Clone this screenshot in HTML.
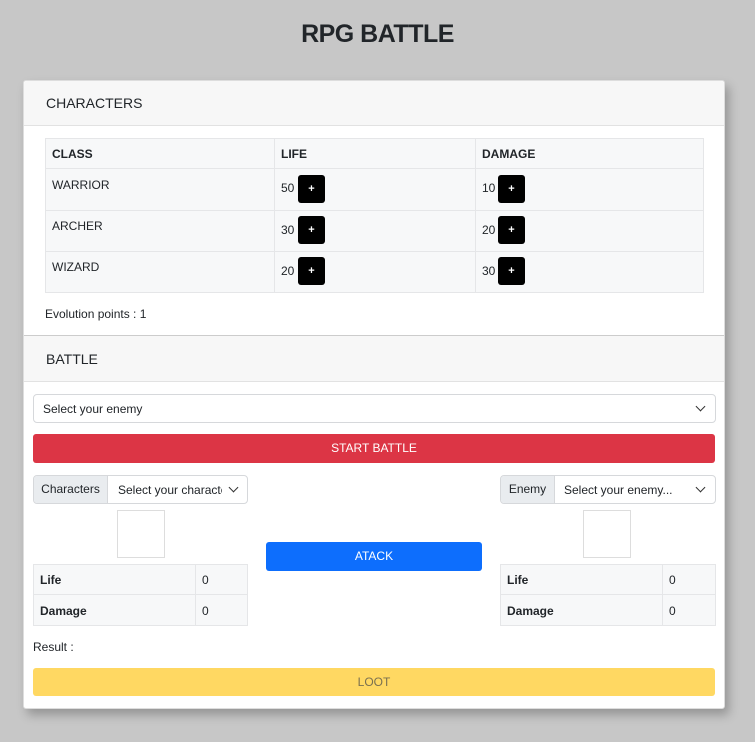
<!DOCTYPE html>
<html><head><style>
*{box-sizing:border-box;margin:0;padding:0}
body{width:755px;height:742px;background:#c7c7c7;font-family:"Liberation Sans",sans-serif;color:#212529;position:relative;overflow:hidden;font-size:12px}
.a{position:absolute}
h1{position:absolute;left:0;width:755px;top:20px;text-align:center;font-size:25px;font-weight:bold;color:#212529;letter-spacing:-0.5px}
.card{left:23px;top:80px;width:702px;height:629px;background:#fff;border:1px solid #ddd;border-radius:3px;box-shadow:4px 6px 10px rgba(0,0,0,.25)}
.hdr{background:#f7f7f7;border-bottom:1px solid #e2e2e2;font-size:14px;padding-left:22px;color:#212529}
.cell{background:#f7f8f9;border:1px solid #e5e6e8}
.pb{width:27px;height:28px;background:#000;border-radius:3px;color:#fff;text-align:center;line-height:28px;font-size:11px;font-weight:bold}
.sel{background:#fff;border:1px solid #d6d8db;border-radius:4px}
.chev{position:absolute;width:7px;height:7px;border-right:1.3px solid #333;border-bottom:1.3px solid #333;transform:rotate(45deg)}
.btn{border-radius:3px;text-align:center;color:#fff;font-size:12px}
</style></head><body>
<h1>RPG BATTLE</h1>
<div class="a card"></div>
<div class="a hdr" style="left:24px;top:81px;width:700px;height:45px;line-height:44px;border-radius:3px 3px 0 0">CHARACTERS</div>

<div class="a cell" style="left:45px;top:138px;width:230px;height:31px"></div>
<div class="a cell" style="left:274px;top:138px;width:202px;height:31px"></div>
<div class="a cell" style="left:475px;top:138px;width:229px;height:31px"></div>
<div class="a" style="left:52px;top:147px;font-weight:bold">CLASS</div>
<div class="a" style="left:281px;top:147px;font-weight:bold">LIFE</div>
<div class="a" style="left:482px;top:147px;font-weight:bold">DAMAGE</div>

<div class="a cell" style="left:45px;top:168px;width:230px;height:43px"></div>
<div class="a cell" style="left:274px;top:168px;width:202px;height:43px"></div>
<div class="a cell" style="left:475px;top:168px;width:229px;height:43px"></div>
<div class="a cell" style="left:45px;top:210px;width:230px;height:42px"></div>
<div class="a cell" style="left:274px;top:210px;width:202px;height:42px"></div>
<div class="a cell" style="left:475px;top:210px;width:229px;height:42px"></div>
<div class="a cell" style="left:45px;top:251px;width:230px;height:42px"></div>
<div class="a cell" style="left:274px;top:251px;width:202px;height:42px"></div>
<div class="a cell" style="left:475px;top:251px;width:229px;height:42px"></div>

<div class="a" style="left:52px;top:178px">WARRIOR</div>
<div class="a" style="left:52px;top:219px">ARCHER</div>
<div class="a" style="left:52px;top:260px">WIZARD</div>
<div class="a" style="left:281px;top:181px">50</div><div class="a pb" style="left:298px;top:175px">+</div>
<div class="a" style="left:281px;top:223px">30</div><div class="a pb" style="left:298px;top:216px">+</div>
<div class="a" style="left:281px;top:264px">20</div><div class="a pb" style="left:298px;top:257px">+</div>
<div class="a" style="left:482px;top:181px">10</div><div class="a pb" style="left:498px;top:175px">+</div>
<div class="a" style="left:482px;top:223px">20</div><div class="a pb" style="left:498px;top:216px">+</div>
<div class="a" style="left:482px;top:264px">30</div><div class="a pb" style="left:498px;top:257px">+</div>

<div class="a" style="left:45px;top:307px">Evolution points : 1</div>

<div class="a hdr" style="left:24px;top:335px;width:700px;height:47px;line-height:46px;border-top:1px solid #ccc">BATTLE</div>

<div class="a sel" style="left:33px;top:394px;width:683px;height:29px"><span class="a" style="left:9px;top:7px">Select your enemy</span><span class="chev" style="left:663px;top:8px"></span></div>

<div class="a btn" style="left:33px;top:434px;width:682px;height:29px;background:#dc3545;line-height:29px">START BATTLE</div>

<div class="a sel" style="left:33px;top:475px;width:215px;height:29px;overflow:hidden">
<div class="a" style="left:0;top:0;width:74px;height:27px;background:#e9ecef;border-right:1px solid #d6d8db;line-height:27px;text-align:center">Characters</div>
<span class="a" style="left:84px;top:7px;width:104px;overflow:hidden;white-space:nowrap">Select your character</span>
<span class="chev" style="left:196px;top:8px"></span></div>

<div class="a sel" style="left:500px;top:475px;width:216px;height:29px;overflow:hidden">
<div class="a" style="left:0;top:0;width:54px;height:27px;background:#e9ecef;border-right:1px solid #d6d8db;line-height:27px;text-align:center">Enemy</div>
<span class="a" style="left:63px;top:7px">Select your enemy...</span>
<span class="chev" style="left:196px;top:8px"></span></div>

<div class="a" style="left:117px;top:510px;width:48px;height:48px;border:1px solid #ddd"></div>
<div class="a" style="left:583px;top:510px;width:48px;height:48px;border:1px solid #ddd"></div>

<div class="a btn" style="left:266px;top:542px;width:216px;height:29px;background:#0d6efd;line-height:29px">ATACK</div>

<div class="a cell" style="left:33px;top:564px;width:163px;height:31px"></div>
<div class="a cell" style="left:195px;top:564px;width:53px;height:31px"></div>
<div class="a cell" style="left:33px;top:594px;width:163px;height:32px"></div>
<div class="a cell" style="left:195px;top:594px;width:53px;height:32px"></div>
<div class="a" style="left:40px;top:573px;font-weight:bold">Life</div><div class="a" style="left:202px;top:573px">0</div>
<div class="a" style="left:40px;top:604px;font-weight:bold">Damage</div><div class="a" style="left:202px;top:604px">0</div>

<div class="a cell" style="left:500px;top:564px;width:163px;height:31px"></div>
<div class="a cell" style="left:662px;top:564px;width:54px;height:31px"></div>
<div class="a cell" style="left:500px;top:594px;width:163px;height:32px"></div>
<div class="a cell" style="left:662px;top:594px;width:54px;height:32px"></div>
<div class="a" style="left:507px;top:573px;font-weight:bold">Life</div><div class="a" style="left:669px;top:573px">0</div>
<div class="a" style="left:507px;top:604px;font-weight:bold">Damage</div><div class="a" style="left:669px;top:604px">0</div>

<div class="a" style="left:33px;top:640px">Result :</div>

<div class="a btn" style="left:33px;top:668px;width:682px;height:28px;background:#ffd862;line-height:28px;color:#7a7050">LOOT</div>
</body></html>
